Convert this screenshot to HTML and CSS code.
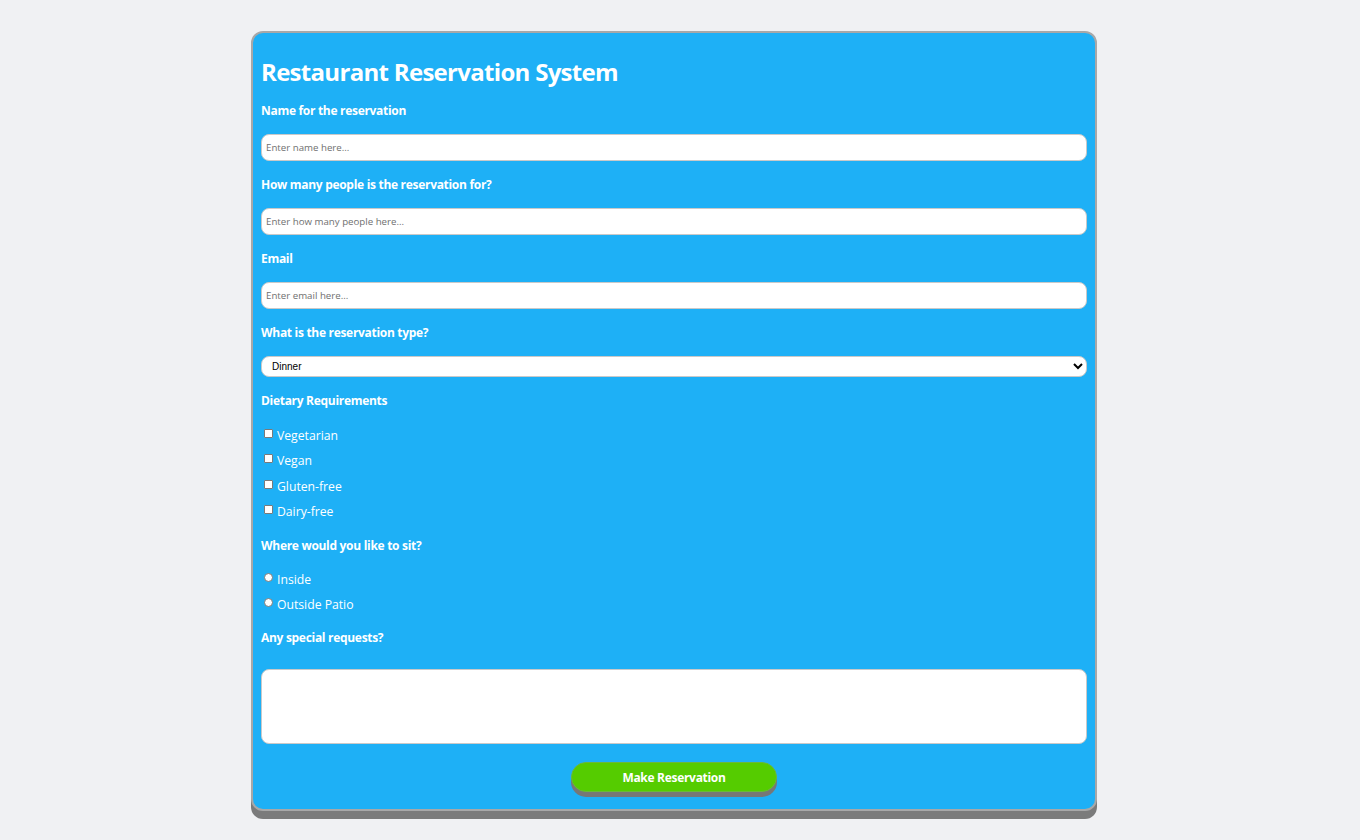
FILE: index.html
```html
<!DOCTYPE html>
<html lang="en">
<head>
<meta charset="utf-8">
<title>Restaurant Reservation System</title>
<link rel="stylesheet" href="styles.css">
</head>
<body>
<main class="card">
  <h1 class="title">Restaurant Reservation System</h1>
  <form class="form">
    <label class="field-label" for="name">Name for the reservation</label>
    <input class="text-input" id="name" type="text" placeholder="Enter name here...">

    <label class="field-label" for="people">How many people is the reservation for?</label>
    <input class="text-input" id="people" type="text" placeholder="Enter how many people here...">

    <label class="field-label" for="email">Email</label>
    <input class="text-input" id="email" type="text" placeholder="Enter email here...">

    <label class="field-label" for="type">What is the reservation type?</label>
    <select class="select-input" id="type">
      <option>Dinner</option>
      <option>Lunch</option>
      <option>Breakfast</option>
    </select>

    <div class="field-label">Dietary Requirements</div>
    <div class="options options-check">
      <label class="option"><input class="check" type="checkbox">Vegetarian</label>
      <label class="option"><input class="check" type="checkbox">Vegan</label>
      <label class="option"><input class="check" type="checkbox">Gluten-free</label>
      <label class="option"><input class="check" type="checkbox">Dairy-free</label>
    </div>

    <div class="field-label">Where would you like to sit?</div>
    <div class="options options-radio">
      <label class="option"><input class="radio" type="radio" name="seat">Inside</label>
      <label class="option"><input class="radio" type="radio" name="seat">Outside Patio</label>
    </div>

    <label class="field-label" for="requests">Any special requests?</label>
    <textarea class="textarea" id="requests"></textarea>

    <div class="actions">
      <button class="submit" type="button">Make Reservation</button>
    </div>
  </form>
</main>
</body>
</html>
```
FILE: styles.css
```css
* { box-sizing: border-box; }

html, body {
  margin: 0;
  padding: 0;
}

body {
  background: #f0f1f3;
  font-family: "Open Sans", "Noto Sans", sans-serif;
  padding: 31px 12px 20px 0;
}

.card {
  width: 846px;
  margin: 0 auto;
  background: #1eb0f6;
  border: 2px solid #a8a8a8;
  border-radius: 12px;
  box-shadow: 0 8px 0 #7b7b7b;
  padding: 8px 8px 12px;
  color: #fff;
}

.title {
  margin: 16px 0 0;
  font-size: 24px;
  line-height: 30px;
  font-weight: 700;
  letter-spacing: -0.7px;
}

.form {
  display: flex;
  flex-direction: column;
}

.field-label {
  display: block;
  margin: 16px 0;
  font-size: 12px;
  line-height: 15px;
  font-weight: 700;
  letter-spacing: -0.3px;
}

.text-input {
  height: 27px;
  width: 100%;
  border: 1px solid #c9c9c9;
  border-radius: 8px;
  padding: 0 4px;
  font-family: "Open Sans", sans-serif;
  font-size: 9.7px;
  color: #333;
  background: #fff;
}

.text-input::placeholder {
  color: #6f6f6f;
}

.select-input {
  height: 21px;
  width: 100%;
  border: 1px solid #c9c9c9;
  border-radius: 8px;
  padding: 0 6px;
  font-family: "Liberation Sans", sans-serif;
  font-size: 10px;
  color: #000;
  background: #fff;
}

.options {
  display: flex;
  flex-direction: column;
}

.options-check {
  margin: -1px 0 -2px;
}

.options-radio {
  margin: -2px 0 -3px;
}

.option {
  display: flex;
  align-items: center;
  height: 25.33px;
  font-size: 12.2px;
  font-weight: 400;
}

.options-radio .option {
  height: 25px;
}

.check {
  appearance: none;
  width: 9px;
  height: 9px;
  margin: -4px 4px 0 3px;
  background: #fff;
  border: 1px solid #7a7a7a;
  border-radius: 1px;
}

.radio {
  appearance: none;
  width: 9px;
  height: 9px;
  margin: -4px 4px 0 3px;
  background: #fff;
  border: 1px solid #7a7a7a;
  border-radius: 50%;
}

.textarea {
  margin-top: 8px;
  height: 75px;
  width: 100%;
  border: 1px solid #c9c9c9;
  border-radius: 8px;
  background: #fff;
  resize: none;
}

.actions {
  display: flex;
  justify-content: center;
  margin-top: 18px;
}

.submit {
  width: 206px;
  height: 30px;
  border: 1px solid #6bb83a;
  border-radius: 15px;
  background: #55cc00;
  box-shadow: 0 5px 0 #777;
  color: #fff;
  font-family: "Open Sans", sans-serif;
  font-size: 12px;
  font-weight: 700;
  letter-spacing: -0.3px;
  margin-bottom: 5px;
}
```
